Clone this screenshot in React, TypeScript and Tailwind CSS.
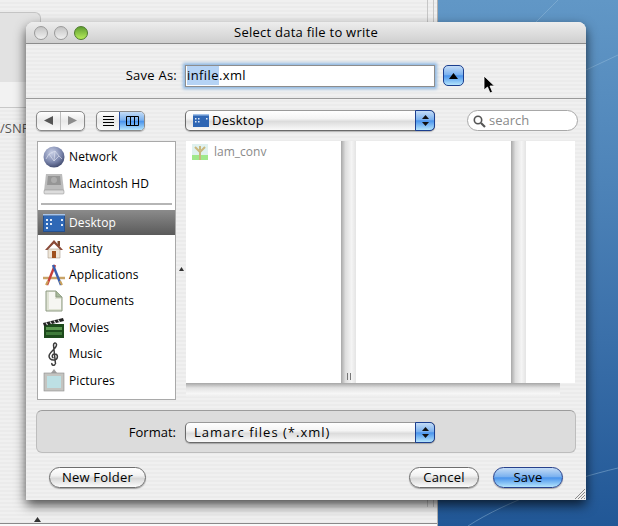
import React from "react";

const font = { fontFamily: '"Open Sans","DejaVu Sans",sans-serif' };
const AQUA = "bg-[linear-gradient(#c4dcf6_0%,#7cb2ef_45%,#4a94ec_52%,#b4e4fc_100%)]";

function Updown() {
  return (
    <div className={`w-[20px] self-stretch -my-px -mr-px rounded-r-[5px] border border-[#1c3f8f] ${AQUA} flex flex-col items-center justify-center gap-[3px]`}>
      <svg width="7" height="4" viewBox="0 0 7 4"><path d="M3.500 0L7 4H0Z" fill="#111" /></svg>
      <svg width="7" height="4" viewBox="0 0 7 4"><path d="M0 0H7L3.500 4Z" fill="#111" /></svg>
    </div>
  );
}

function Popup({ children }: { children: React.ReactNode }) {
  return (
    <div className="w-[250px] h-[21px] flex items-center rounded-[5px] border border-[#6a6a6a] border-t-[#999] bg-[linear-gradient(#fff_0%,#f4f4f4_40%,#dcdcdc_55%,#fafafa_100%)] shadow-[0_1px_1px_rgba(0,0,0,0.25)]">
      <div className="flex-1 flex items-center pl-[8px] text-black whitespace-nowrap">{children}</div>
      <Updown />
    </div>
  );
}

function Pill({ children, blue, w }: { children: React.ReactNode; blue?: boolean; w: string }) {
  const cls = blue
    ? `border-[#27418c] ${AQUA}`
    : "border-[#6e6e6e] bg-[linear-gradient(#fff_0%,#f2f2f2_40%,#d8d8d8_55%,#fbfbfb_100%)]";
  return (
    <div className={`${w} h-[21px] rounded-full border flex items-center justify-center text-[13px] tracking-[0.2px] text-black shadow-[0_1px_1px_rgba(0,0,0,0.3)] ${cls}`}>
      {children}
    </div>
  );
}

function Net() {
  return (
    <svg width="22" height="22" viewBox="0 0 22 22">
      <defs>
        <radialGradient id="g1" cx="40%" cy="30%" r="75%"><stop offset="0" stopColor="#c8cfe6" /><stop offset="0.6" stopColor="#7c87ad" /><stop offset="1" stopColor="#3b4468" /></radialGradient>
      </defs>
      <circle cx="11" cy="11" r="10.5" fill="url(#g1)" />
      <path d="M6 8L12 5L16 10L11 15L6 8M12 5L11 15M3 13L6 8M16 10L19 13" stroke="#e4e8f4" strokeWidth="0.6" fill="none" />
    </svg>
  );
}
function Hd() {
  return (
    <svg width="22" height="22" viewBox="0 0 22 22">
      <path d="M3 1H19L21 18H1Z" fill="#bcbcbc" />
      <path d="M5 3H17L18 12H4Z" fill="#969696" />
      <circle cx="11" cy="7" r="3" fill="#adadad" />
      <rect x="1" y="17" width="20" height="4" rx="1" fill="#dcdcdc" stroke="#888" strokeWidth="0.5" />
    </svg>
  );
}
function Desk() {
  return (
    <svg width="22" height="18" viewBox="0 0 22 18">
      <rect width="22" height="18" fill="#24508f" />
      <rect x="0" y="0" width="22" height="1.500" fill="#a9c6ea" />
      <rect x="1" y="2" width="20" height="15" fill="#2f68b6" />
      <rect x="3" y="5" width="2" height="2" fill="#dfe9f7" />
      <rect x="7" y="5" width="2" height="2" fill="#dfe9f7" />
      <rect x="3" y="9" width="2" height="2" fill="#dfe9f7" />
      <rect x="7" y="9" width="2" height="2" fill="#dfe9f7" />
      <rect x="3" y="13" width="2" height="2" fill="#dfe9f7" />
      <rect x="18" y="5" width="2" height="2" fill="#dfe9f7" />
      <rect x="18" y="10" width="2" height="2" fill="#dfe9f7" />
    </svg>
  );
}
function Home() {
  return (
    <svg width="20" height="20" viewBox="0 0 20 20">
      <rect x="13.5" y="2" width="2.5" height="5" fill="#7a4a30" />
      <path d="M4 10H16V19H4Z" fill="#efe6d8" stroke="#9a8a78" strokeWidth="0.5" />
      <path d="M10 1L19 11H16.5L10 4.5L3.5 11H1Z" fill="#8a4a38" />
      <rect x="8" y="12" width="4" height="7" fill="#a0501c" />
    </svg>
  );
}
function Apps() {
  return (
    <svg width="24" height="22" viewBox="0 0 24 22">
      <path d="M1 14H23" stroke="#c9a468" strokeWidth="2.5" />
      <path d="M5 21L13 1" stroke="#c8403a" strokeWidth="2.4" />
      <path d="M19 21L11 1" stroke="#3b5fae" strokeWidth="2.4" />
      <path d="M4 21L6 17M20 21L18 17" stroke="#caa15a" strokeWidth="2" />
    </svg>
  );
}
function Doc() {
  return (
    <svg width="18" height="22" viewBox="0 0 18 22">
      <path d="M1 1H11L17 7V21H1Z" fill="#dfe3d4" stroke="#8d9a82" strokeWidth="1" />
      <path d="M4 2H10V9H16V19H4Z" fill="#f6f6f2" />
      <path d="M11 1V7H17" fill="#a6b89a" stroke="#8d9a82" strokeWidth="1" />
    </svg>
  );
}
function Mov() {
  return (
    <svg width="22" height="20" viewBox="0 0 22 20">
      <rect x="1" y="6" width="20" height="14" fill="#1d4a1c" />
      <rect x="3" y="9" width="16" height="3" fill="#5c9a50" />
      <rect x="3" y="14" width="16" height="3" fill="#3f7a3a" />
      <path d="M0 5L20 0L21 3L1 8Z" fill="#222" />
      <path d="M3 4.5L4.500 7M7 3.500L8.500 6M11 2.500L12.500 5M15 1.500L16.500 4" stroke="#ddd" strokeWidth="1.2" />
    </svg>
  );
}
function Mus() {
  return (
    <svg width="14" height="24" viewBox="0 0 14 24">
      <path d="M8 22C8 24 4 23.500 5 21M8.500 22L6.500 3C6.500 1 9 0 9.500 2.500C10 6 4 9 2.500 12.500C1 16 4 18.500 7.500 18C11 17.500 11.500 12.500 8 12C5 11.500 4.500 15 6.500 16" stroke="#3c3c3c" strokeWidth="1.5" fill="none" />
    </svg>
  );
}
function Pic() {
  return (
    <svg width="22" height="24" viewBox="0 0 22 24">
      <path d="M11 0L14 4H8Z" fill="#a0a0a0" />
      <rect x="1" y="4" width="20" height="18" fill="#c4c4c0" stroke="#8c8c8c" strokeWidth="0.6" />
      <rect x="4" y="7" width="14" height="12" fill="#bde0e4" />
    </svg>
  );
}

function Row({ icon, label, selected }: { icon: React.ReactNode; label: string; selected?: boolean }) {
  const cls = selected
    ? "h-[25.6px] bg-[linear-gradient(#8b8b8b,#5a5a5a)] text-white"
    : "h-[26.4px] text-black";
  return (
    <div className={`flex items-center shrink-0 ${cls}`}>
      <div className="w-[31px] flex items-center justify-center">{icon}</div>
      <span className="text-[12px] tracking-[0.1px]">{label}</span>
    </div>
  );
}

function Sidebar() {
  return (
    <div className="w-[139px] h-[259px] shrink-0 bg-white border border-[#a9a9a9] flex flex-col overflow-hidden pt-[2px]">
      <Row icon={<Net />} label="Network" />
      <Row icon={<Hd />} label="Macintosh HD" />
      <div className="mx-[3px] mt-[6px] mb-[5px] h-[2px] shrink-0 bg-[#b5b5b5]" />
      <Row icon={<Desk />} label="Desktop" selected />
      <Row icon={<Home />} label="sanity" />
      <Row icon={<Apps />} label="Applications" />
      <Row icon={<Doc />} label="Documents" />
      <Row icon={<Mov />} label="Movies" />
      <Row icon={<Mus />} label="Music" />
      <Row icon={<Pic />} label="Pictures" />
    </div>
  );
}

function ColBar({ grip }: { grip?: boolean }) {
  return (
    <div className="w-[15px] shrink-0 bg-[linear-gradient(90deg,#a8a8a8,#dedede_30%,#f4f4f4_70%,#e4e4e4)] flex items-end justify-center pb-[3px]">
      {grip && (
        <div className="flex gap-[2px]">
          <div className="w-px h-[7px] bg-[#777]" />
          <div className="w-px h-[7px] bg-[#777]" />
        </div>
      )}
    </div>
  );
}

function Lam() {
  return (
    <svg width="16" height="16" viewBox="0 0 16 16">
      <rect width="16" height="11" fill="#dff1ef" />
      <rect y="11" width="16" height="5" fill="#9fe88a" />
      <path d="M8 16V7M8 8L3 3M8 8L13 3M8 6V2" stroke="#c9b77c" strokeWidth="2" />
    </svg>
  );
}

function Browser() {
  return (
    <div className="w-[389px] flex flex-col">
      <div className="h-[242px] flex">
        <div className="w-[155px] bg-white">
          <div className="flex items-center gap-[6px] pl-[6px] pt-[2px] text-[12px] text-[#8a8a8a] leading-[16px]">
            <Lam />
            <span className="pt-px">lam_conv</span>
          </div>
        </div>
        <ColBar grip />
        <div className="w-[155px] bg-white" />
        <ColBar />
        <div className="flex-1 bg-white" />
      </div>
      <div className="w-[374px] h-[14px] bg-[linear-gradient(#a6a6a6,#e2e2e2_35%,#f6f6f6_75%,#ececec)]" />
    </div>
  );
}

export default function App() {
  const stripes = "bg-[repeating-linear-gradient(#f0f0f0_0px,#f0f0f0_2px,#ebebeb_2px,#ebebeb_4px)]";
  return (
    <div style={font} className="relative w-[618px] h-[526px] overflow-hidden flex">
      {/* underlying window */}
      <div className={`relative w-[438px] h-full flex flex-col ${stripes} border-r border-[#b0b0b0]`}>
        <div className="h-[12px]" />
        <div className="w-[41px] h-[70px] rounded-tr-[6px] border-t border-r border-[#c4c4c4] bg-[#e2e2e2]" />
        <div className="w-[41px] h-[25px] bg-[#f2f2f2]" />
        <div className="h-[41px] w-[30px] text-[13px] text-[#555] leading-[40px] overflow-hidden whitespace-nowrap border-t border-[#c8c8c8]">/SNF</div>
        <div className="flex-1" />
        <div className="h-[3px] bg-[#fafafa] border-t border-[#8a8a8a]" />
        <svg width="7" height="5" viewBox="0 0 7 5" className="absolute left-[34px] bottom-[4px]"><path d="M3.500 0L7 5H0Z" fill="#333" /></svg>
        <div className="absolute left-[427px] top-0 h-[507px] w-[7px] border-x border-[#c6c6c6]" />
      </div>
      {/* desktop */}
      <div className="flex-1 h-full bg-[linear-gradient(#6197c6_0%,#4d83b8_35%,#3a6fa9_65%,#215796_100%)]">
        <svg width="180" height="526" viewBox="0 0 180 526">
          <path d="M30 526C70 500 130 480 180 468M60 60C90 30 105 15 120 0M148 70L180 55" stroke="#9cc0de" strokeOpacity="0.45" strokeWidth="1" fill="none" />
        </svg>
      </div>

      {/* dialog */}
      <div className={`absolute left-[26px] top-[22px] w-[560px] h-[478px] rounded-t-[8px] flex flex-col ${stripes} shadow-[0_5px_12px_rgba(0,0,0,0.7)]`}>
        <div className="relative h-[22px] shrink-0 rounded-t-[8px] border-b border-[#8c8c8c] bg-[linear-gradient(#ededed,#cfcfcf)] flex items-center justify-center text-[13px] tracking-[0.25px] text-black">
          <div className="absolute left-[8px] top-[4px] flex gap-[6px]">
            <div className="w-[14px] h-[14px] rounded-full border border-[#9a9a9a] bg-[linear-gradient(#c4c4c4,#f0f0f0)]" />
            <div className="w-[14px] h-[14px] rounded-full border border-[#9a9a9a] bg-[linear-gradient(#c4c4c4,#f0f0f0)]" />
            <div className="w-[14px] h-[14px] rounded-full border border-[#4d7a2b] bg-[linear-gradient(#5f9e30,#b6ec5a)]" />
          </div>
          Select data file to write
        </div>

        <div className="h-[55px] shrink-0 border-b border-[#9a9a9a] flex items-center pt-[9px]">
          <span className="text-[13px] tracking-[0.25px] text-black whitespace-nowrap w-[151px] mr-[8px] text-right">Save As:</span>
          <div className="w-[250px] h-[22px] bg-white border border-[#8d8d8d] shadow-[0_0_3px_2px_#8fb8e2] flex items-center pl-[1px] text-[13px] tracking-[0.4px] text-black">
            <span className="bg-[#b5d3f5]">infile</span>.xml
          </div>
          <div className={`ml-[8px] w-[21px] h-[21px] rounded-[5px] border border-[#1c3f8f] ${AQUA} flex items-center justify-center`}>
            <svg width="9" height="6" viewBox="0 0 9 6"><path d="M4.500 0L9 6H0Z" fill="#000" /></svg>
          </div>
        </div>

        <div className="h-[23px] mt-[10px] shrink-0 flex items-center pl-[10px]">
          <div className="w-[49px] h-[20px] rounded-[5px] border border-[#8a8a8a] bg-[linear-gradient(#fff,#e8e8e8_50%,#fafafa)] flex shadow-[0_1px_1px_rgba(0,0,0,0.25)]">
            <div className="flex-1 flex items-center justify-center border-r border-[#bdbdbd]">
              <svg width="9" height="9" viewBox="0 0 9 9"><path d="M0 4.500L9 0V9Z" fill="#555" /></svg>
            </div>
            <div className="flex-1 flex items-center justify-center">
              <svg width="9" height="9" viewBox="0 0 9 9"><path d="M9 4.500L0 0V9Z" fill="#8c8c8c" /></svg>
            </div>
          </div>
          <div className="ml-[11px] w-[49px] h-[20px] rounded-[5px] border border-[#8a8a8a] bg-[linear-gradient(#fff,#e8e8e8_50%,#fafafa)] flex overflow-hidden shadow-[0_1px_1px_rgba(0,0,0,0.25)]">
            <div className="flex-1 flex flex-col gap-[2px] items-center justify-center">
              <div className="w-[11px] h-px bg-black" />
              <div className="w-[11px] h-px bg-black" />
              <div className="w-[11px] h-px bg-black" />
              <div className="w-[11px] h-px bg-black" />
            </div>
            <div className={`w-[25px] border-l border-[#2a4fa0] ${AQUA} flex items-center justify-center`}>
              <svg width="13" height="10" viewBox="0 0 13 10"><path d="M.5.500H12.500V9.500H.5ZM4.500.500V9.500M8.500.500V9.500" stroke="#000" fill="none" /></svg>
            </div>
          </div>
          <div className="ml-[40px] text-[13px] tracking-[0.25px]">
            <Popup>
              <span className="-ml-px mr-[3px] inline-flex"><svg width="16" height="13" viewBox="0 0 16 13"><rect width="16" height="13" fill="#2f66b4" /><rect width="16" height="1.500" fill="#9fbfe8" /><rect x="2" y="4" width="1.500" height="1.500" fill="#dfe9f7" /><rect x="5" y="4" width="1.500" height="1.500" fill="#dfe9f7" /><rect x="2" y="7" width="1.500" height="1.500" fill="#dfe9f7" /><rect x="5" y="7" width="1.500" height="1.500" fill="#dfe9f7" /><rect x="13" y="4" width="1.500" height="1.500" fill="#dfe9f7" /></svg></span>
              Desktop
            </Popup>
          </div>
          <div className="ml-[32px] w-[111px] h-[21px] rounded-full border border-[#a8a8a8] bg-white flex items-center pl-[5px] pt-px text-[13px] text-[#8a8a8a]">
            <svg width="13" height="13" viewBox="0 0 13 13" className="mr-[3px]"><circle cx="5" cy="5" r="3.700" stroke="#555" strokeWidth="1.600" fill="none" /><path d="M8 8L12 12" stroke="#555" strokeWidth="2.200" /></svg>
            search
          </div>
        </div>

        <div className="mt-[9px] pl-[11px] flex h-[259px] shrink-0">
          <Sidebar />
          <div className="w-[10px] h-[256px] flex items-center justify-center text-[#444]">
            <svg width="5" height="4" viewBox="0 0 5 4"><path d="M2.500 0L5 4H0Z" fill="#333" /></svg>
          </div>
          <Browser />
        </div>

        <div className="mx-[10px] mt-[10px] h-[43px] shrink-0 rounded-[6px] border border-[#bdbdbd] border-t-[#9c9c9c] bg-[#dcdcdc] flex items-center pt-[2px]">
          <span className="w-[139px] text-right mr-[9px] text-[13px] text-black">Format:</span>
          <div className="text-[13px] tracking-[1px]"><Popup>Lamarc files (*.xml)</Popup></div>
        </div>

        <div className="mt-[14px] h-[21px] flex items-center pl-[23px] pr-[23px]">
          <Pill w="w-[97px]">New Folder</Pill>
          <div className="flex-1" />
          <Pill w="w-[70px]">Cancel</Pill>
          <div className="w-[14px]" />
          <Pill w="w-[70px]" blue>Save</Pill>
        </div>

        <svg width="12" height="12" viewBox="0 0 12 12" className="absolute right-0 bottom-0">
          <path d="M1 11L11 1M4 11L11 4M7 11L11 7M10 11L11 10" stroke="#8a8a8a" strokeWidth="1" />
        </svg>
      </div>

      {/* pointer */}
      <svg width="14" height="20" viewBox="0 0 14 20" className="absolute left-[483px] top-[75px]">
        <path d="M1 1V15L4.500 12L7 18L9.500 17L7 11H11.500Z" fill="#000" stroke="#fff" strokeWidth="0.8" />
      </svg>
    </div>
  );
}
